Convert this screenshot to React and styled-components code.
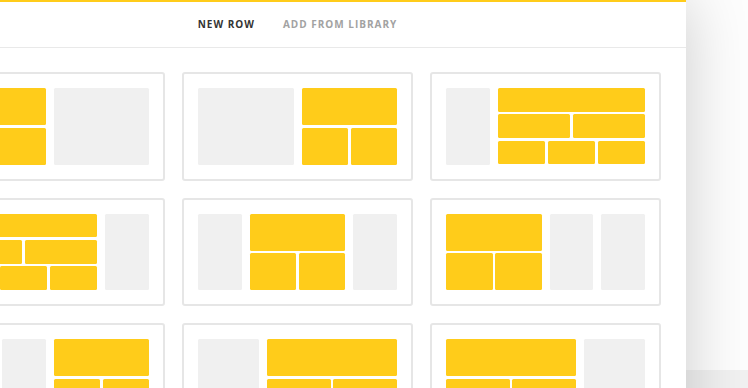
import React from "react";
import styled, { createGlobalStyle } from "styled-components";

const Global = createGlobalStyle`
  html, body { margin: 0; padding: 0; background: #fdfdfd; overflow: hidden; }
  body { font-family: "Open Sans", "Liberation Sans", sans-serif; }
`;

const Viewport = styled.div`
  display: flex;
  align-items: flex-start;
  width: 748px;
  height: 388px;
  overflow: hidden;
  background: #fdfdfd;
`;

const Panel = styled.section`
  position: relative;
  z-index: 1;
  flex: 0 0 777px;
  margin-left: -91px;
  height: 560px;
  box-sizing: border-box;
  background: #fff;
  border-top: 2px solid #ffcc1a;
  box-shadow: 0 0 60px rgba(0, 0, 0, 0.2);
`;

const Aside = styled.aside`
  flex: 1;
  align-self: stretch;
  display: flex;
  flex-direction: column;
  padding-top: 370px;
`;

const BackBlock = styled.div`
  flex: 1;
  background: #f1f1f1;
`;

const TabBar = styled.nav`
  display: flex;
  justify-content: center;
  height: 45px;
  border-bottom: 1px solid #e9e9e9;
`;

const Tab = styled.button`
  all: unset;
  cursor: pointer;
  padding: 0 14px;
  font-family: "Open Sans", "Liberation Sans", sans-serif;
  font-weight: 700;
  font-size: 10px;
  line-height: 45px;
  letter-spacing: 1px;
  text-transform: uppercase;
  color: ${(p) => (p.$active ? "#333" : "#a2a2a2")};
`;

const LayoutGrid = styled.div`
  display: grid;
  grid-template-columns: repeat(3, 231px);
  column-gap: 17px;
  row-gap: 17px;
  padding: 24px 25px;
`;

const Card = styled.div`
  box-sizing: border-box;
  height: 108.5px;
  padding: 14px;
  background: #fff;
  border: 2px solid #e6e6e6;
  border-radius: 3px;
  display: grid;
  grid-template-columns: repeat(${(p) => p.$cols}, 1fr);
  column-gap: 8px;
`;

const GreyCell = styled.div`
  grid-column: span ${(p) => p.$span};
  background: #f0f0f0;
  border-radius: 1.5px;
`;

const YellowCell = styled.div`
  grid-column: span ${(p) => p.$span};
  display: flex;
  flex-direction: column;
  gap: 2.5px;
`;

const BlockRow = styled.div`
  flex: 1;
  display: flex;
  gap: 2.5px;
`;

const Block = styled.div`
  flex: 1;
  background: #ffcc1a;
  border-radius: 1.5px;
`;

const layouts = [
  { cols: 2, cells: [{ y: 1, rows: [1, 2] }, { g: 1 }] },
  { cols: 2, cells: [{ g: 1 }, { y: 1, rows: [1, 2] }] },
  { cols: 4, cells: [{ g: 1 }, { y: 3, rows: [1, 2, 3] }] },
  { cols: 4, cells: [{ y: 3, rows: [1, 2, 3] }, { g: 1 }] },
  { cols: 4, cells: [{ g: 1 }, { y: 2, rows: [1, 2] }, { g: 1 }] },
  { cols: 4, cells: [{ y: 2, rows: [1, 2] }, { g: 1 }, { g: 1 }] },
  { cols: 4, cells: [{ g: 1 }, { g: 1 }, { y: 2, rows: [1, 2] }] },
  { cols: 3, cells: [{ g: 1 }, { y: 2, rows: [1, 2] }] },
  { cols: 3, cells: [{ y: 2, rows: [1, 2] }, { g: 1 }] },
];

function LayoutCard({ layout }) {
  return (
    <Card $cols={layout.cols}>
      {layout.cells.map((c, i) =>
        c.g ? (
          <GreyCell key={i} $span={c.g} />
        ) : (
          <YellowCell key={i} $span={c.y}>
            {c.rows.map((n, r) => (
              <BlockRow key={r}>
                {Array.from({ length: n }).map((_, b) => (
                  <Block key={b} />
                ))}
              </BlockRow>
            ))}
          </YellowCell>
        )
      )}
    </Card>
  );
}

export default function App() {
  return (
    <>
      <Global />
      <Viewport>
        <Panel>
          <TabBar>
            <Tab $active>New Row</Tab>
            <Tab>Add From Library</Tab>
          </TabBar>
          <LayoutGrid>
            {layouts.map((l, i) => (
              <LayoutCard key={i} layout={l} />
            ))}
          </LayoutGrid>
        </Panel>
        <Aside>
          <BackBlock />
        </Aside>
      </Viewport>
    </>
  );
}
